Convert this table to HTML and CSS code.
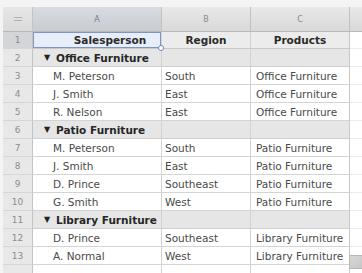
FILE: index.html
```html
<!DOCTYPE html>
<html>
<head>
<meta charset="utf-8">
<link rel="stylesheet" href="styles.css">
</head>
<body>
<div class="sheet">
  <div class="row colhead">
    <div class="rh corner"><svg width="10" height="6" viewBox="0 0 10 6"><path d="M1 1.5H9M1 4.5H9" stroke="#b0b0b0" stroke-width="1"/></svg></div>
    <div class="ch sel">A</div>
    <div class="ch">B</div>
    <div class="ch">C</div>
    <div class="ch last"></div>
  </div>
  <div class="row head">
    <div class="rh selr">1</div>
    <div class="c a selcell">Salesperson<span class="knob"></span></div>
    <div class="c b">Region</div>
    <div class="c cc">Products</div>
    <div class="c d"></div>
  </div>
  <div class="row group">
    <div class="rh">2</div>
    <div class="c a"><span class="tri">▼</span>Office Furniture</div>
    <div class="c b"></div>
    <div class="c cc"></div>
    <div class="c d"></div>
  </div>
  <div class="row">
    <div class="rh">3</div>
    <div class="c a">M. Peterson</div>
    <div class="c b">South</div>
    <div class="c cc">Office Furniture</div>
    <div class="c d"></div>
  </div>
  <div class="row">
    <div class="rh">4</div>
    <div class="c a">J. Smith</div>
    <div class="c b">East</div>
    <div class="c cc">Office Furniture</div>
    <div class="c d"></div>
  </div>
  <div class="row">
    <div class="rh">5</div>
    <div class="c a">R. Nelson</div>
    <div class="c b">East</div>
    <div class="c cc">Office Furniture</div>
    <div class="c d"></div>
  </div>
  <div class="row group">
    <div class="rh">6</div>
    <div class="c a"><span class="tri">▼</span>Patio Furniture</div>
    <div class="c b"></div>
    <div class="c cc"></div>
    <div class="c d"></div>
  </div>
  <div class="row">
    <div class="rh">7</div>
    <div class="c a">M. Peterson</div>
    <div class="c b">South</div>
    <div class="c cc">Patio Furniture</div>
    <div class="c d"></div>
  </div>
  <div class="row">
    <div class="rh">8</div>
    <div class="c a">J. Smith</div>
    <div class="c b">East</div>
    <div class="c cc">Patio Furniture</div>
    <div class="c d"></div>
  </div>
  <div class="row">
    <div class="rh">9</div>
    <div class="c a">D. Prince</div>
    <div class="c b">Southeast</div>
    <div class="c cc">Patio Furniture</div>
    <div class="c d"></div>
  </div>
  <div class="row">
    <div class="rh">10</div>
    <div class="c a">G. Smith</div>
    <div class="c b">West</div>
    <div class="c cc">Patio Furniture</div>
    <div class="c d"></div>
  </div>
  <div class="row group">
    <div class="rh">11</div>
    <div class="c a"><span class="tri">▼</span>Library Furniture</div>
    <div class="c b"></div>
    <div class="c cc"></div>
    <div class="c d"></div>
  </div>
  <div class="row">
    <div class="rh">12</div>
    <div class="c a">D. Prince</div>
    <div class="c b">Southeast</div>
    <div class="c cc">Library Furniture</div>
    <div class="c d"></div>
  </div>
  <div class="row">
    <div class="rh">13</div>
    <div class="c a">A. Normal</div>
    <div class="c b">West</div>
    <div class="c cc">Library Furniture</div>
    <div class="c d"></div>
  </div>
  <div class="row tail">
    <div class="rh"></div>
    <div class="c a"></div>
    <div class="c b"></div>
    <div class="c cc"></div>
    <div class="c d"></div>
  </div>
  <div class="resize"></div>
</div>
</body>
</html>
```

FILE: styles.css
```css
html, body {
  margin: 0;
  padding: 0;
  background: #f4f4f4;
  overflow: hidden;
}
body {
  width: 362px;
  height: 273px;
  font-family: "DejaVu Sans", "Liberation Sans", sans-serif;
}
.sheet {
  position: relative;
  margin-top: 7px;
  margin-left: 3px;
  background: #fff;
}
.row {
  display: grid;
  grid-template-columns: 30px 129px 89px 99px 1fr;
  height: 18px;
}
.colhead {
  height: 25px;
}
.head {
  height: 17px;
}
.tail {
  height: 12px;
}
.rh {
  background: #e8e8e8;
  border-right: 1px solid #c4c4c4;
  border-bottom: 1px solid #d6d6d6;
  color: #8c8c8c;
  font-size: 9px;
  display: flex;
  align-items: center;
  justify-content: center;
  box-sizing: border-box;
}
.corner {
  background: linear-gradient(#e6e6e6, #dadada);
  border-bottom: 1px solid #b9b9b9;
}
.ch {
  background: linear-gradient(#e8e8e8, #d9d9d9);
  border-right: 1px solid #c2c2c2;
  border-bottom: 1px solid #b9b9b9;
  color: #8a8a8a;
  font-size: 8px;
  display: flex;
  align-items: center;
  justify-content: center;
  box-sizing: border-box;
}
.ch.sel {
  background: linear-gradient(#d8dbe0, #c8ccd3);
  color: #7a7d84;
}
.ch.last {
  border-right: none;
}
.selr {
  background: #d3d5d9;
}
.c {
  border-right: 1px solid #d2d2d2;
  border-bottom: 1px solid #d4d4d4;
  font-size: 10.5px;
  color: #4a4a4a;
  display: flex;
  align-items: center;
  white-space: nowrap;
  overflow: hidden;
  box-sizing: border-box;
}
.c.a {
  padding-left: 20px;
}
.c.b {
  padding-left: 3px;
}
.c.cc {
  padding-left: 5px;
  border-right: 1px solid #c8c8c8;
}
.c.d {
  border-right: none;
  border-bottom: 1px solid #ececec;
}
.head .c {
  background: #ececec;
  font-weight: bold;
  color: #2a2a2a;
  justify-content: center;
  padding-left: 0;
  border-bottom-color: #c9c9c9;
}
.head .c.d {
  background: #fff;
  border-bottom-color: #ececec;
}
.head .c.a {
  padding-left: 26px;
}
.selcell {
  position: relative;
  overflow: visible !important;
  background: #e7eef9 !important;
  box-shadow: inset 0 0 0 1px #7d97c0;
}
.knob {
  position: absolute;
  right: -3px;
  bottom: -3px;
  width: 4px;
  height: 4px;
  border-radius: 50%;
  background: #fff;
  border: 1px solid #6f8ab8;
  z-index: 2;
}
.group .c {
  background: #e6e6e6;
  font-weight: bold;
  color: #262626;
  border-bottom-color: #cfcfcf;
}
.group .c.d {
  background: #fff;
  border-bottom-color: #ececec;
}
.group .c.a {
  padding-left: 11px;
}
.tri {
  font-size: 8px;
  width: 12px;
  color: #222;
}
.tail .c {
  border-bottom: none;
}
.resize {
  position: absolute;
  left: 346px;
  top: 248px;
  width: 14px;
  height: 14px;
  background: linear-gradient(135deg, #d8d8d8 0%, #c6c6c6 100%);
  border: 1px solid #b8b8b8;
  box-sizing: border-box;
}
```
